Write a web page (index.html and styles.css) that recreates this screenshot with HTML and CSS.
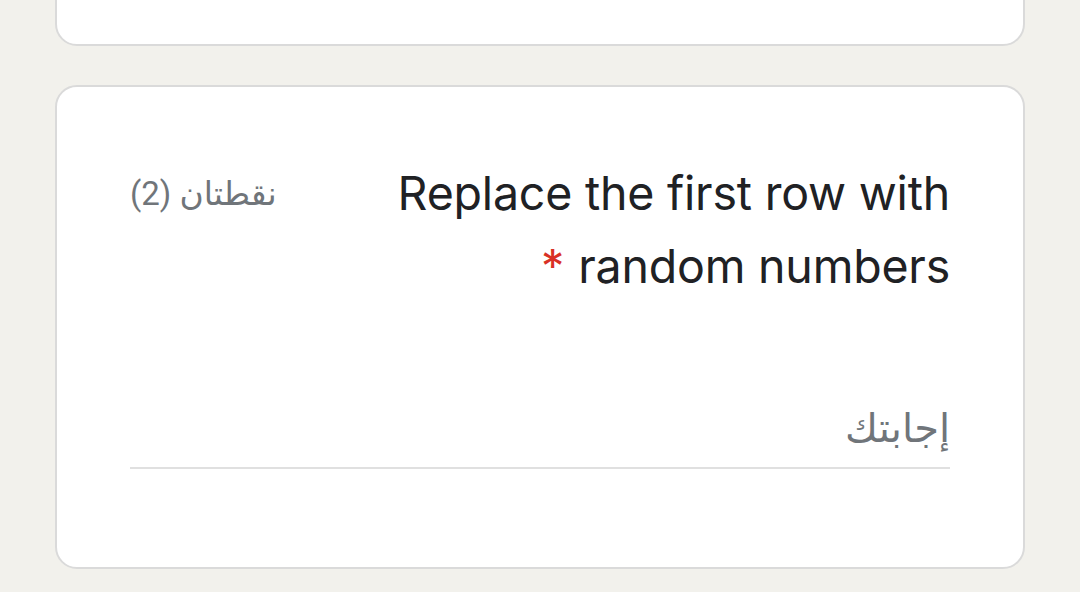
FILE: index.html
```html
<!DOCTYPE html>
<html lang="ar" dir="rtl">
<head>
<meta charset="utf-8">
<link rel="stylesheet" href="styles.css">
</head>
<body>
<div class="page">
  <div class="card card-prev"></div>
  <div class="card card-question">
    <div class="q-head">
      <div class="q-title">
        <div class="q-line" dir="ltr">Replace the first row with</div>
        <div class="q-line q-last"><span class="q-text" dir="ltr">random numbers</span><span class="req">*</span></div>
      </div>
      <div class="q-points">نقطتان (2)</div>
    </div>
    <div class="answer">
      <div class="answer-placeholder">إجابتك</div>
    </div>
  </div>
</div>
</body>
</html>
```
FILE: styles.css
```css
html, body {
  margin: 0;
  padding: 0;
  background: #f2f1ec;
}
.page {
  padding: 0 55px;
  display: flex;
  flex-direction: column;
  gap: 39px;
  margin-top: -60px;
}
.card {
  background: #fff;
  border: 2px solid #dadada;
  border-radius: 22px;
  box-sizing: border-box;
}
.card-prev {
  height: 106px;
}
.card-question {
  height: 484px;
  padding: 70px 73px 0 73px;
}
.q-head {
  display: flex;
  justify-content: space-between;
  align-items: flex-start;
}
.q-title {
  font-family: "Inter", sans-serif;
  font-size: 46.5px;
  line-height: 73px;
  color: #202124;
  letter-spacing: -0.2px;
  display: flex;
  flex-direction: column;
  align-items: flex-start;
}
.q-line {
  white-space: nowrap;
}
.q-last {
  display: flex;
  align-items: baseline;
  gap: 14px;
}
.req {
  color: #d93025;
}
.q-points {
  font-family: "Roboto", "Noto Sans", "DejaVu Sans", sans-serif;
  font-size: 33px;
  line-height: 73px;
  color: #70757a;
}
.answer {
  margin-top: 100px;
  border-bottom: 2px solid #e0e0e0;
  padding-bottom: 12px;
}
.answer-placeholder {
  font-family: "Roboto", "Noto Sans", "DejaVu Sans", sans-serif;
  font-size: 40px;
  line-height: 52px;
  color: #70757a;
}
```
